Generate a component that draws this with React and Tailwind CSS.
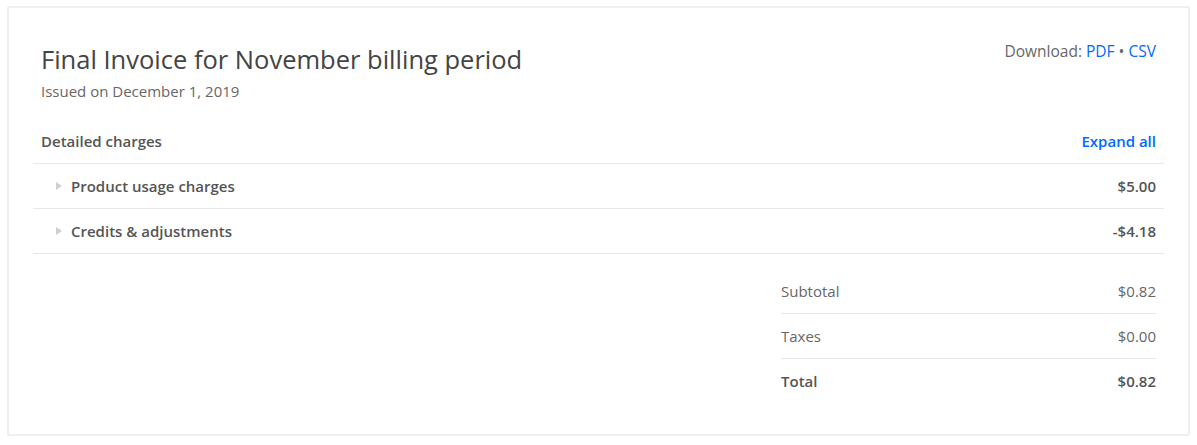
export default function App() {
  const font = { fontFamily: '"Open Sans", "Liberation Sans", sans-serif' };
  return (
    <div className="w-[1197px] h-[445px] bg-white pt-[6px] pl-[7px]" style={font}>
      <div className="w-[1183px] h-[430px] border-2 border-[#efefef] rounded-[2px] px-6 pt-[34px]">
        <div className="flex justify-between px-2">
          <div>
            <h1 className="text-[25.5px] leading-[34px] text-[#444] font-normal">Final Invoice for November billing period</h1>
            <p className="text-[15px] leading-[20px] text-[#676767] mt-[5px]">Issued on December 1, 2019</p>
          </div>
          <div className="text-[15.5px] leading-[20px] text-[#676767] -mt-[1px]">
            Download: <a className="text-[#0069ff]">PDF</a> • <a className="text-[#0069ff]">CSV</a>
          </div>
        </div>
        <div className="flex justify-between items-center px-2 h-[45px] mt-[18px] border-b border-[#e8e8e8]">
          <span className="text-[15px] font-semibold text-[#555]">Detailed charges</span>
          <span className="text-[15px] font-semibold text-[#0069ff]">Expand all</span>
        </div>
        {[
          ["Product usage charges", "$5.00"],
          ["Credits & adjustments", "-$4.18"],
        ].map(([l, v]) => (
          <div key={l} className="flex justify-between items-center px-2 h-[45px] border-b border-[#e8e8e8]">
            <span className="flex items-center text-[15px] font-semibold text-[#555]">
              <svg width="6" height="8" viewBox="0 0 6 8" className="ml-[15px] mr-[9px]">
                <path d="M0 0 L6 4 L0 8 Z" fill="#cfcfcf" />
              </svg>
              {l}
            </span>
            <span className="text-[15px] font-semibold text-[#555]">{v}</span>
          </div>
        ))}
        <div className="flex justify-end pr-2 mt-[15px]">
          <div className="w-[375px]">
            {[
              ["Subtotal", "$0.82", false],
              ["Taxes", "$0.00", false],
              ["Total", "$0.82", true],
            ].map(([l, v, b], i) => (
              <div
                key={l}
                className={
                  "flex justify-between items-center h-[45px] text-[15px] " +
                  (i < 2 ? "border-b border-[#e8e8e8] " : "") +
                  (b ? "font-semibold text-[#555]" : "text-[#676767]")
                }
              >
                <span>{l}</span>
                <span>{v}</span>
              </div>
            ))}
          </div>
        </div>
      </div>
    </div>
  );
}
